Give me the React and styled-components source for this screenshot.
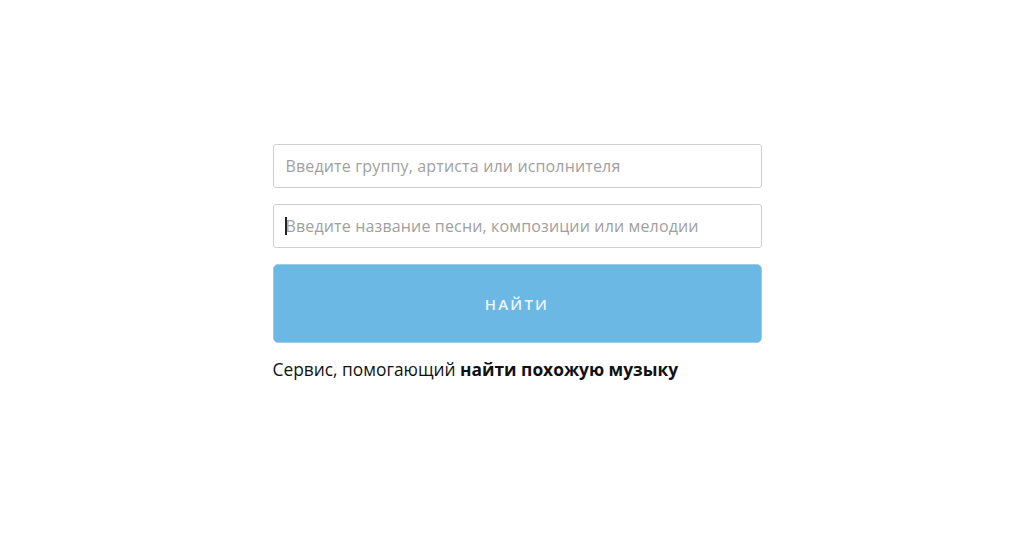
import React from "react";
import styled, { createGlobalStyle } from "styled-components";

const GlobalStyle = createGlobalStyle`
  html, body {
    margin: 0;
    padding: 0;
    background: #ffffff;
  }
  body {
    font-family: "Open Sans", "Liberation Sans", sans-serif;
  }
`;

const Page = styled.div`
  display: flex;
  justify-content: center;
  padding: 144px 0 0 10px;
  min-height: 555px;
  box-sizing: border-box;
`;

const Form = styled.form`
  display: flex;
  flex-direction: column;
  width: 489px;
`;

const FieldWrap = styled.div`
  position: relative;
  margin-bottom: 16px;
`;

const Field = styled.input`
  display: block;
  box-sizing: border-box;
  width: 100%;
  height: 44px;
  padding: 0 12px;
  border: 1px solid #cfcfcf;
  border-radius: 3px;
  font-family: "Open Sans", "Liberation Sans", sans-serif;
  font-size: 16px;
  letter-spacing: 0.15px;
  color: #333;
  outline: none;
  background: #fff;
  caret-color: transparent;
  &::placeholder {
    color: #a0a0a0;
  }
`;

const Caret = styled.span`
  position: absolute;
  left: 12px;
  top: 13px;
  width: 2px;
  height: 18px;
  background: #222;
`;

const SearchButton = styled.button`
  height: 79px;
  width: 100%;
  border: 1px solid #9fcbe6;
  border-radius: 5px;
  background: #6bb8e4;
  color: #eef6fc;
  font-family: "Open Sans", "Liberation Sans", sans-serif;
  font-size: 15px;
  font-weight: 600;
  letter-spacing: 2.2px;
  text-transform: uppercase;
  cursor: pointer;
`;

const Caption = styled.p`
  margin: 14px 0 0;
  font-size: 17.35px;
  color: #111;
  b {
    font-weight: 700;
  }
`;

export default function App() {
  return (
    <>
      <GlobalStyle />
      <Page>
        <Form onSubmit={(e) => e.preventDefault()}>
          <FieldWrap>
            <Field placeholder="Введите группу, артиста или исполнителя" />
          </FieldWrap>
          <FieldWrap>
            <Field placeholder="Введите название песни, композиции или мелодии" />
            <Caret />
          </FieldWrap>
          <SearchButton type="submit">Найти</SearchButton>
          <Caption>
            Сервис, помогающий <b>найти похожую музыку</b>
          </Caption>
        </Form>
      </Page>
    </>
  );
}
